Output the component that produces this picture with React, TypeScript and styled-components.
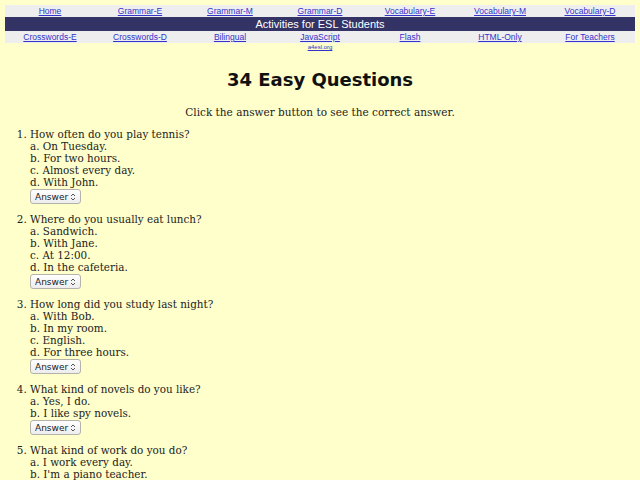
import styled, { createGlobalStyle } from "styled-components";

const GlobalStyle = createGlobalStyle`
  html, body {
    margin: 0;
    padding: 0;
    background: #ffffcc;
  }
  body {
    font-family: "DejaVu Serif", serif;
    color: #222;
  }
`;

const Page = styled.div`
  padding: 5px 5px 0;
`;

const NavTable = styled.div`
  width: 630px;
  display: flex;
  flex-direction: column;
`;

const NavRow = styled.div`
  display: grid;
  grid-template-columns: repeat(7, 1fr);
  height: 12px;
  background: #eeeeee;
  align-items: center;
`;

const NavLink = styled.a`
  font-family: "Liberation Sans", Arial, sans-serif;
  font-size: 8.5px;
  line-height: 12px;
  color: #3333cc;
  text-decoration: underline;
  text-align: center;
`;

const Banner = styled.div`
  height: 14px;
  background: #333366;
  color: #ffffff;
  font-family: "Liberation Sans", Arial, sans-serif;
  font-size: 11px;
  line-height: 14px;
  text-align: center;
`;

const SiteLink = styled.a`
  display: block;
  text-align: center;
  font-family: "Liberation Sans", Arial, sans-serif;
  font-size: 6px;
  line-height: 8px;
  color: #3333cc;
  text-decoration: underline;
`;

const Title = styled.h1`
  margin: 17px 0 0;
  text-align: center;
  font-family: "DejaVu Sans", sans-serif;
  font-weight: bold;
  font-size: 18px;
  line-height: 24px;
  color: #111;
`;

const Intro = styled.p`
  margin: 13px 0 0;
  text-align: center;
  font-size: 10.5px;
  line-height: 14px;
`;

const QuestionList = styled.ol`
  margin: 9px 0 0;
  padding-left: 25px;
  font-size: 10.4px;
  line-height: 12px;
`;

const Question = styled.li`
  margin-bottom: 9px;
`;

const Options = styled.div`
  display: flex;
  flex-direction: column;
  align-items: flex-start;
`;

const SelectWrap = styled.div`
  position: relative;
  margin-top: 1px;
`;

const AnswerSelect = styled.select`
  appearance: none;
  -webkit-appearance: none;
  width: 51px;
  height: 15px;
  padding: 0 0 0 4px;
  border: 1px solid #b3b3aa;
  border-radius: 3px;
  background: linear-gradient(#ffffff, #ededed);
  font-family: "DejaVu Sans", sans-serif;
  font-size: 9px;
  color: #222;
  display: block;
`;

const Arrows = styled.svg`
  position: absolute;
  right: 5px;
  top: 4px;
  pointer-events: none;
`;

type Q = { text: string; options: string[] };

const questions: Q[] = [
  {
    text: "How often do you play tennis?",
    options: ["On Tuesday.", "For two hours.", "Almost every day.", "With John."],
  },
  {
    text: "Where do you usually eat lunch?",
    options: ["Sandwich.", "With Jane.", "At 12:00.", "In the cafeteria."],
  },
  {
    text: "How long did you study last night?",
    options: ["With Bob.", "In my room.", "English.", "For three hours."],
  },
  {
    text: "What kind of novels do you like?",
    options: ["Yes, I do.", "I like spy novels."],
  },
  {
    text: "What kind of work do you do?",
    options: ["I work every day.", "I'm a piano teacher."],
  },
];

const topLinks = ["Home", "Grammar-E", "Grammar-M", "Grammar-D", "Vocabulary-E", "Vocabulary-M", "Vocabulary-D"];
const bottomLinks = ["Crosswords-E", "Crosswords-D", "Bilingual", "JavaScript", "Flash", "HTML-Only", "For Teachers"];

function App() {
  return (
    <Page>
      <GlobalStyle />
      <NavTable>
        <NavRow>
          {topLinks.map((l) => (
            <NavLink key={l} href="#">{l}</NavLink>
          ))}
        </NavRow>
        <Banner>Activities for ESL Students</Banner>
        <NavRow>
          {bottomLinks.map((l) => (
            <NavLink key={l} href="#">{l}</NavLink>
          ))}
        </NavRow>
      </NavTable>
      <SiteLink href="#">a4esl.org</SiteLink>
      <Title>34 Easy Questions</Title>
      <Intro>Click the answer button to see the correct answer.</Intro>
      <QuestionList>
        {questions.map((q, i) => (
          <Question key={i}>
            {q.text}
            <Options>
              {q.options.map((o, j) => (
                <span key={j}>
                  {String.fromCharCode(97 + j)}. {o}
                </span>
              ))}
              <SelectWrap>
                <AnswerSelect defaultValue="Answer">
                  <option>Answer</option>
                </AnswerSelect>
                <Arrows width="6" height="8" viewBox="0 0 6 8">
                  <path d="M1 3 L3 1 L5 3 M1 5 L3 7 L5 5" fill="none" stroke="#555" strokeWidth="1" />
                </Arrows>
              </SelectWrap>
            </Options>
          </Question>
        ))}
      </QuestionList>
    </Page>
  );
}

export default App;
